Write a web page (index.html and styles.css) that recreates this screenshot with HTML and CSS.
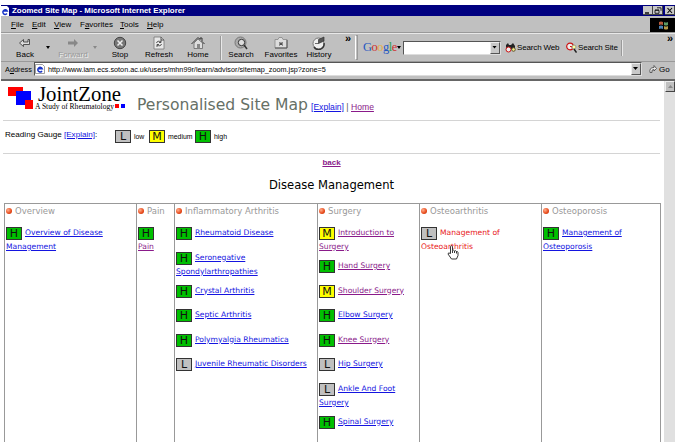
FILE: index.html
```
<!DOCTYPE html>
<html lang="en">
  <head>
    <meta charset="UTF-8" />
    <title>Zoomed Site Map</title>
    <link rel="stylesheet" href="styles.css">
  </head>
  <body>
    <div class="window">
      <div class="titlebar">
        <svg class="ie" width="8" height="10" viewBox="0 0 8 10"><path d="M0 0h6l2 2v8H0z" fill="#fff"/><path d="M6 7.5A2.3 2.3 0 1 1 6.2 5H2" fill="none" stroke="#1834c8" stroke-width="1.5"/></svg>
        <span class="caption">Zoomed Site Map - Microsoft Internet Explorer</span>
        <div class="controls">
          <svg width="10" height="9"><path d="M2 7h4" stroke="#000" stroke-width="1.4"/></svg>
          <svg width="10" height="9"><path d="M4 1.8h4v3M2 4.3h4v3H2zM2 4h4" fill="none" stroke="#000" stroke-width=".8"/></svg>
          <svg class="close" width="10" height="9"><path d="M2.5 2l4.5 5M7 2L2.5 7" stroke="#000" stroke-width="1.1"/></svg>
        </div>
      </div>

      <div class="menubar">
        <span class="m-file"><u>F</u>ile</span>
        <span class="m-edit"><u>E</u>dit</span>
        <span class="m-view"><u>V</u>iew</span>
        <span class="m-fav">F<u>a</u>vorites</span>
        <span class="m-tools"><u>T</u>ools</span>
        <span class="m-help"><u>H</u>elp</span>
        <div class="throbber">
          <svg width="25" height="14"><path d="M9 4q2-1 4 0v3q-2-1-4 0z" fill="#b65a3c"/><path d="M14 4q2 1 4 0v3q-2 1-4 0z" fill="#5d9a65"/><path d="M9 8q2-1 4 0v3q-2-1-4 0z" fill="#4d83b5"/><path d="M14 8q2 1 4 0v3q-2 1-4 0z" fill="#b59a48"/></svg>
        </div>
      </div>

      <div class="toolbar">
        <div class="tool back"><svg width="14" height="14"><path d="M1.5 7l4-3.5V6H10V3.5h1.500V8.500H5.500V10.500z" fill="#ddd" stroke="#333" stroke-width=".8"/></svg><span>Back</span></div>
        <i class="arrow"></i>
        <div class="tool forward"><svg width="14" height="14"><path d="M12 7L8 3v2.500H2v3h6V11z" fill="#888"/></svg><span>Forward</span></div>
        <i class="arrow dim"></i>
        <div class="tool stop"><svg width="14" height="14"><circle cx="7" cy="7" r="5.700" fill="#777" stroke="#444"/><path d="M4.500 4.500l5 5M9.500 4.500l-5 5" stroke="#eee" stroke-width="1.500"/></svg><span>Stop</span></div>
        <div class="tool refresh"><svg width="14" height="14"><path d="M2 1h7l3 3v9H2z" fill="#e8e8e8" stroke="#777" stroke-width=".8"/><path d="M9 1v3h3M4.500 7q1-3 4.500-1M9 4v2.500H7M9.500 8q-1 3-4.500 1M5 11V8.500h2" fill="none" stroke="#444" stroke-width=".9"/></svg><span>Refresh</span></div>
        <div class="tool home"><svg width="14" height="14"><path d="M3 7v5.500h8.500V7L7 3z" fill="#ddd" stroke="#666" stroke-width=".8"/><path d="M.5 8L7 1.500l2 2V2h2v3.500L13.500 8" fill="none" stroke="#333"/><path d="M6 8h3v4.500H6z" fill="#888"/></svg><span>Home</span></div>
        <i class="sep"></i>
        <div class="tool search"><svg width="14" height="14"><circle cx="6.500" cy="6.500" r="5.500" fill="#aaa" stroke="#777"/><circle cx="7.500" cy="6.500" r="3.200" fill="#ddd" stroke="#333"/><path d="M10 9l3 4" stroke="#333" stroke-width="1.600"/></svg><span>Search</span></div>
        <div class="tool favorites"><svg width="14" height="14"><path d="M1 3.500h3l1-2h3l1 2h4V12H1z" fill="#ddd" stroke="#888" stroke-width=".8"/><path d="M1 12h12V4" fill="none" stroke="#555"/><path d="M5.500 6l3 3.500M8.500 6l-3 3.500M5 8h4" stroke="#444"/></svg><span>Favorites</span></div>
        <div class="tool history"><svg width="14" height="14"><circle cx="6.500" cy="7.500" r="5.500" fill="#eee" stroke="#777"/><path d="M2 11a5.500 5.500 0 0 0 10-4" fill="none" stroke="#333" stroke-width="1.400"/><path d="M6.500 7.500V3.500L12 1v4L6.500 7.500H3" fill="#555" stroke="#333" stroke-width=".7"/></svg><span>History</span></div>
        <b class="more">»</b>
        <i class="grip"></i>
        <div class="google"><span class="b">G</span><span class="r">o</span><span class="y">o</span><span class="b">g</span><span class="g">l</span><span class="r">e</span></div>
        <i class="arrow garrow"></i>
        <div class="combo query"><span class="drop"></span></div>
        <div class="gbtn web"><svg width="11" height="11"><path d="M1 3l2-2 1 2h2l2-2 2 3v4H1z" fill="#222"/><circle cx="3.500" cy="7.500" r="2.500" fill="#eee" stroke="#c11"/><circle cx="8.500" cy="7.500" r="1.800" fill="#ee8" stroke="#653"/></svg><span>Search Web</span></div>
        <div class="gbtn site"><svg width="11" height="11"><circle cx="4" cy="4.500" r="3.300" fill="#eee" stroke="#c11" stroke-width="1.200"/><path d="M4 4.500h2v2" stroke="#c11" fill="none"/><circle cx="8" cy="5" r="2" fill="#ff9" stroke="#998"/><path d="M8 7l2.500 3.500" stroke="#222" stroke-width="1.500"/></svg><span>Search Site</span></div>
        <i class="sep last"></i>
        <b class="more end">»</b>
      </div>

      <div class="addressbar">
        <span class="addr">A<u>d</u>dress</span>
        <div class="combo url">
          <svg class="ie" width="10" height="10" viewBox="0 0 10 10"><path d="M.5.500h7l2 2v7h-9z" fill="#fff" stroke="#777" stroke-width=".7"/><path d="M7 7A2.300 2.300 0 1 1 7.200 4.700H3" fill="none" stroke="#1834c8" stroke-width="1.500"/></svg>
          <span class="link">http://www.iam.ecs.soton.ac.uk/users/mhn99r/learn/advisor/sitemap_zoom.jsp?zone=5</span>
          <span class="drop"></span>
        </div>
        <svg class="goicon" width="8" height="10"><path d="M1 8.500Q0 3.500 5 3.500V1.500L7.500 4.500 5 7V5.500Q2 5.500 3 8.500z" fill="#eee" stroke="#444" stroke-width=".8"/></svg>
        <span class="go">Go</span>
      </div>

      <div class="view">
        <div class="page">
          <div class="masthead">
            <svg class="logo" width="120" height="32">
              <path d="M3 4h15v9H3z" fill="#f00"/><path d="M11 8h15v14H11z" fill="#00f"/><path d="M20 17h8v9h-8z" fill="#f00"/>
              <text class="logo-name" x="33" y="18" textLength="83" lengthAdjust="spacingAndGlyphs">JointZone</text>
              <text class="logo-sub" x="30" y="25.500" textLength="79" lengthAdjust="spacingAndGlyphs">A Study of Rheumatology</text>
              <path d="M110 21h4v4h-4z" fill="#f00"/><path d="M116 21h4v4h-4z" fill="#00f"/>
            </svg>
            <h1>Personalised Site Map</h1>
            <span class="headlinks"><a href="#">[Explain]</a> | <a class="visited" href="#">Home</a></span>
          </div>
          <div class="gauge">
            <span class="gauge-label">Reading Gauge <a href="#">[Explain]</a>:</span>
            <span class="badge low">L</span><span class="level l1">low</span>
            <span class="badge medium">M</span><span class="level l2">medium</span>
            <span class="badge high">H</span><span class="level l3">high</span>
          </div>
          <a class="backlink visited" href="#">back</a>
          <h2>Disease Management</h2>

          <div class="map">
            <div class="col">
              <h3>Overview</h3>
              <div class="item"><span class="badge high">H</span><a href="#">Overview of Disease<br>Management</a></div>
            </div>
            <div class="col">
              <h3>Pain</h3>
              <div class="item"><span class="badge high">H</span><a class="visited" href="#"><br>Pain</a></div>
            </div>
            <div class="col">
              <h3>Inflammatory Arthritis</h3>
              <div class="item"><span class="badge high">H</span><a href="#">Rheumatoid Disease</a></div>
              <div class="item"><span class="badge high">H</span><a href="#">Seronegative<br>Spondylarthropathies</a></div>
              <div class="item"><span class="badge high">H</span><a href="#">Crystal Arthritis</a></div>
              <div class="item"><span class="badge high">H</span><a href="#">Septic Arthritis</a></div>
              <div class="item"><span class="badge high">H</span><a href="#">Polymyalgia Rheumatica</a></div>
              <div class="item"><span class="badge low">L</span><a href="#">Juvenile Rheumatic Disorders</a></div>
            </div>
            <div class="col">
              <h3>Surgery</h3>
              <div class="item"><span class="badge medium">M</span><a class="visited" href="#">Introduction to<br>Surgery</a></div>
              <div class="item"><span class="badge high">H</span><a class="visited" href="#">Hand Surgery</a></div>
              <div class="item"><span class="badge medium">M</span><a class="visited" href="#">Shoulder Surgery</a></div>
              <div class="item"><span class="badge high">H</span><a href="#">Elbow Surgery</a></div>
              <div class="item"><span class="badge high">H</span><a class="visited" href="#">Knee Surgery</a></div>
              <div class="item"><span class="badge low">L</span><a href="#">Hip Surgery</a></div>
              <div class="item"><span class="badge low">L</span><a href="#">Ankle And Foot<br>Surgery</a></div>
              <div class="item"><span class="badge high">H</span><a href="#">Spinal Surgery</a></div>
            </div>
            <div class="col">
              <h3>Osteoarthritis</h3>
              <div class="item"><span class="badge low">L</span><a class="hover" href="#">Management of<br>Osteoarthritis</a>
                <svg class="hand" width="12" height="15"><path d="M3.500 8.500V1.500Q4.500 0 5.500 1.500V5.500Q6.500 4.500 7.500 6 8.500 5 9.500 6.500 10.500 6 11 7.500V10.500L9.500 14H4.500L1 9Q1 7 3.500 8.500zM5.500 5.500V8M7.500 6v2M9.500 6.500V8.500" fill="#fff" stroke="#222" stroke-width=".9"/></svg>
              </div>
            </div>
            <div class="col">
              <h3>Osteoporosis</h3>
              <div class="item"><span class="badge high">H</span><a href="#">Management of<br>Osteoporosis</a></div>
            </div>
          </div>
        </div>
        <div class="scrollbar"><span class="up"></span></div>
      </div>
    </div>
  </body>
</html>
```
FILE: styles.css
```
* {
  box-sizing: border-box;
}

body {
  margin: 0;
  padding-top: 5px;
  height: 442px;
  overflow: hidden;
  background: #fff;
  font-family: "Liberation Sans", Arial, sans-serif;
  font-size: 8.5px;
  color: #000;
}

svg {
  display: block;
  flex: none;
}

a {
  color: #1414e0;
}

.visited {
  color: #8a1a8a;
}

.window {
  width: 674px;
  margin-left: 1px;
  background: #c0c0c0;
}

.titlebar {
  display: flex;
  align-items: center;
  height: 11px;
  background: #000080;
  color: #fff;
}

.caption {
  margin-left: 3px;
  font-size: 7.9px;
  font-weight: bold;
  white-space: nowrap;
}

.controls {
  display: flex;
  margin-left: auto;
}

.controls svg {
  background: #c8c8c8;
  border-right: 1px solid #444;
  border-bottom: 1px solid #444;
}

.controls .close {
  margin-left: 2px;
}

.menubar {
  display: flex;
  align-items: center;
  height: 17px;
  padding-left: 10px;
  border-bottom: 1px solid #999;
  font-size: 8px;
}

.menubar span {
  flex: none;
}

.m-file {
  width: 21px;
}

.m-edit {
  width: 22px;
}

.m-view {
  width: 26px;
}

.m-fav {
  width: 40px;
}

.m-tools {
  width: 27px;
}

.throbber {
  margin-left: auto;
  margin-top: 1px;
  background: #000;
}

.toolbar {
  display: flex;
  align-items: center;
  height: 29px;
  border-top: 1px solid #e8e8e8;
  border-bottom: 1px solid #999;
}

.tool {
  display: flex;
  flex: none;
  flex-direction: column;
  align-items: center;
  font-size: 8px;
  line-height: 10px;
}

.tool svg {
  margin-top: 1px;
}

.back {
  width: 32px;
  margin-left: 8px;
}

.forward {
  width: 34px;
  margin-left: 6px;
  color: #999;
  text-shadow: 1px 1px #eee;
}

.stop {
  width: 30px;
  margin-left: 8px;
}

.refresh {
  width: 40px;
  margin-left: 4px;
}

.home {
  width: 32px;
  margin-left: 3px;
}

.search {
  width: 30px;
  margin-left: 4px;
}

.favorites {
  width: 40px;
  margin-left: 5px;
}

.history {
  width: 30px;
  margin-left: 3px;
}

.arrow {
  flex: none;
  width: 4px;
  height: 3px;
  margin-left: 5px;
  background: #000;
  clip-path: polygon(0 0, 100% 0, 50% 100%);
}

.dim {
  margin-left: 3px;
  background: #888;
}

.sep {
  flex: none;
  width: 2px;
  height: 24px;
  margin-left: 6px;
  border-left: 1px solid #999;
  border-right: 1px solid #e8e8e8;
}

.more {
  align-self: flex-start;
  flex: none;
  width: 8px;
  margin-left: 11px;
  font-size: 11px;
  line-height: 9px;
}

.grip {
  flex: none;
  width: 3px;
  height: 25px;
  margin-left: 2px;
  border: 1px solid #999;
  border-left-color: #fff;
}

.google {
  flex: none;
  width: 34px;
  margin-left: 5px;
  font: 12.5px "Liberation Serif", serif;
  letter-spacing: -0.5px;
}

.b {
  color: #2558c0;
}

.r {
  color: #d03030;
}

.y {
  color: #e8b040;
}

.g {
  color: #30a050;
}

.garrow {
  margin-left: 0;
}

.combo {
  display: flex;
  align-items: center;
  flex: none;
  background: #fff;
  border: 1px solid #555;
  border-right-color: #ddd;
  border-bottom-color: #ddd;
}

.drop {
  width: 10px;
  height: 100%;
  margin-left: auto;
  background: #c8c8c8;
  border: 1px solid #eee;
  border-right-color: #555;
  border-bottom-color: #555;
}

.drop::before {
  content: "";
  display: block;
  width: 5px;
  height: 3px;
  margin: 3px auto 0 1px;
  background: #000;
  clip-path: polygon(0 0, 100% 0, 50% 100%);
}

.query {
  width: 98px;
  height: 14px;
  margin-left: 2px;
}

.gbtn {
  display: flex;
  align-items: center;
  flex: none;
  gap: 1px;
  font-size: 8px;
  letter-spacing: -0.15px;
  white-space: nowrap;
}

.web {
  width: 56px;
  margin-left: 4px;
}

.site {
  width: 52px;
  margin-left: 5px;
}

.last {
  height: 16px;
  margin-left: 3px;
}

.end {
  margin-left: auto;
}

.addressbar {
  display: flex;
  align-items: center;
  height: 19px;
  padding: 0 0 3px 4px;
  border-bottom: 2px solid #666;
}

.addr {
  width: 29px;
  font-size: 7.3px;
}

.url {
  width: 608px;
  height: 14px;
}

.link {
  margin-left: 3px;
  font-size: 7.25px;
}

.goicon {
  margin-left: 7px;
}

.go {
  margin-left: 2px;
  font-size: 8px;
}

.view {
  display: flex;
  height: 361px;
  background: #fff;
}

.page {
  width: 663px;
  padding-left: 2px;
}

.masthead {
  display: flex;
  align-items: flex-end;
  height: 40px;
  padding-bottom: 5px;
  width: 657px;
  border-bottom: 1px solid #d4d4d4;
}

.logo {
  margin: 0 0 0 2px;
}

.logo-name {
  font: 21px "Liberation Serif", serif;
}

.logo-sub {
  font: 8px "Liberation Serif", serif;
}

h1 {
  width: 174px;
  margin: 0 0 0 12px;
  font: 15.6px/20px "DejaVu Sans", sans-serif;
  color: #667066;
  white-space: nowrap;
}

.headlinks {
  font-size: 8.6px;
  line-height: 16px;
  color: #555;
  white-space: nowrap;
}

.gauge {
  display: flex;
  align-items: center;
  width: 657px;
  height: 33px;
  padding-bottom: 2px;
  border-bottom: 1px solid #d4d4d4;
}

.gauge-label {
  width: 112px;
  padding: 0 0 3px 2px;
  font-size: 8.1px;
  white-space: nowrap;
}

.level {
  font-size: 6.9px;
  padding-left: 3px;
}

.l1 {
  width: 18px;
}

.l2 {
  width: 30px;
}

.badge {
  display: block;
  flex: none;
  width: 16px;
  height: 13px;
  border: 1px solid #333;
  font: 11px/11px "DejaVu Sans", sans-serif;
  text-align: center;
  color: #111;
}

.low {
  background: #c0c0c0;
}

.medium {
  background: #ff0;
}

.high {
  background: #00c000;
}

.backlink {
  display: block;
  width: 657px;
  margin-top: 4px;
  font-size: 8px;
  line-height: 10px;
  font-weight: bold;
  text-align: center;
}

h2 {
  width: 657px;
  margin: 9px 0 10px;
  font: 11.55px/16px "DejaVu Sans", sans-serif;
  text-align: center;
}

.map {
  display: grid;
  grid-template-columns: 132px 38px 143px 102px 122px 119px;
  width: 657px;
  height: 245px;
  margin-left: 1px;
  border: 1px solid #999;
  font: 7.6px/14px "DejaVu Sans", sans-serif;
}

.col {
  padding: 0 0 0 1px;
  border-right: 1px solid #999;
  white-space: nowrap;
}

.col:last-child {
  border-right: 0;
}

h3 {
  display: flex;
  align-items: center;
  gap: 3px;
  margin: 0 0 8px;
  font-size: 8.5px;
  font-weight: normal;
  line-height: 14px;
  color: #999;
}

h3::before {
  content: "";
  width: 6px;
  height: 6px;
  border-radius: 50%;
  background: radial-gradient(circle at 35% 35%, #ffb090, #e84818 60%, #a83010);
}

.item {
  position: relative;
  min-height: 24.5px;
  padding-bottom: 5px;
}

.item .badge {
  float: left;
  margin: 1px 3px -1px 0;
}

.hover {
  color: #e82020;
  text-decoration: none;
}

.hand {
  position: absolute;
  left: 26px;
  top: 19px;
}

.scrollbar {
  width: 11px;
  background: #e0e0e0;
}

.up {
  display: block;
  width: 10px;
  height: 11px;
  margin-left: 1px;
  background: #c0c0c0;
  border: 1px solid #eee;
  border-right-color: #444;
  border-bottom-color: #444;
}

.up::before {
  content: "";
  display: block;
  width: 5px;
  height: 3px;
  margin: 3px 2px;
  background: #888;
  clip-path: polygon(50% 0, 100% 100%, 0 100%);
}
```
